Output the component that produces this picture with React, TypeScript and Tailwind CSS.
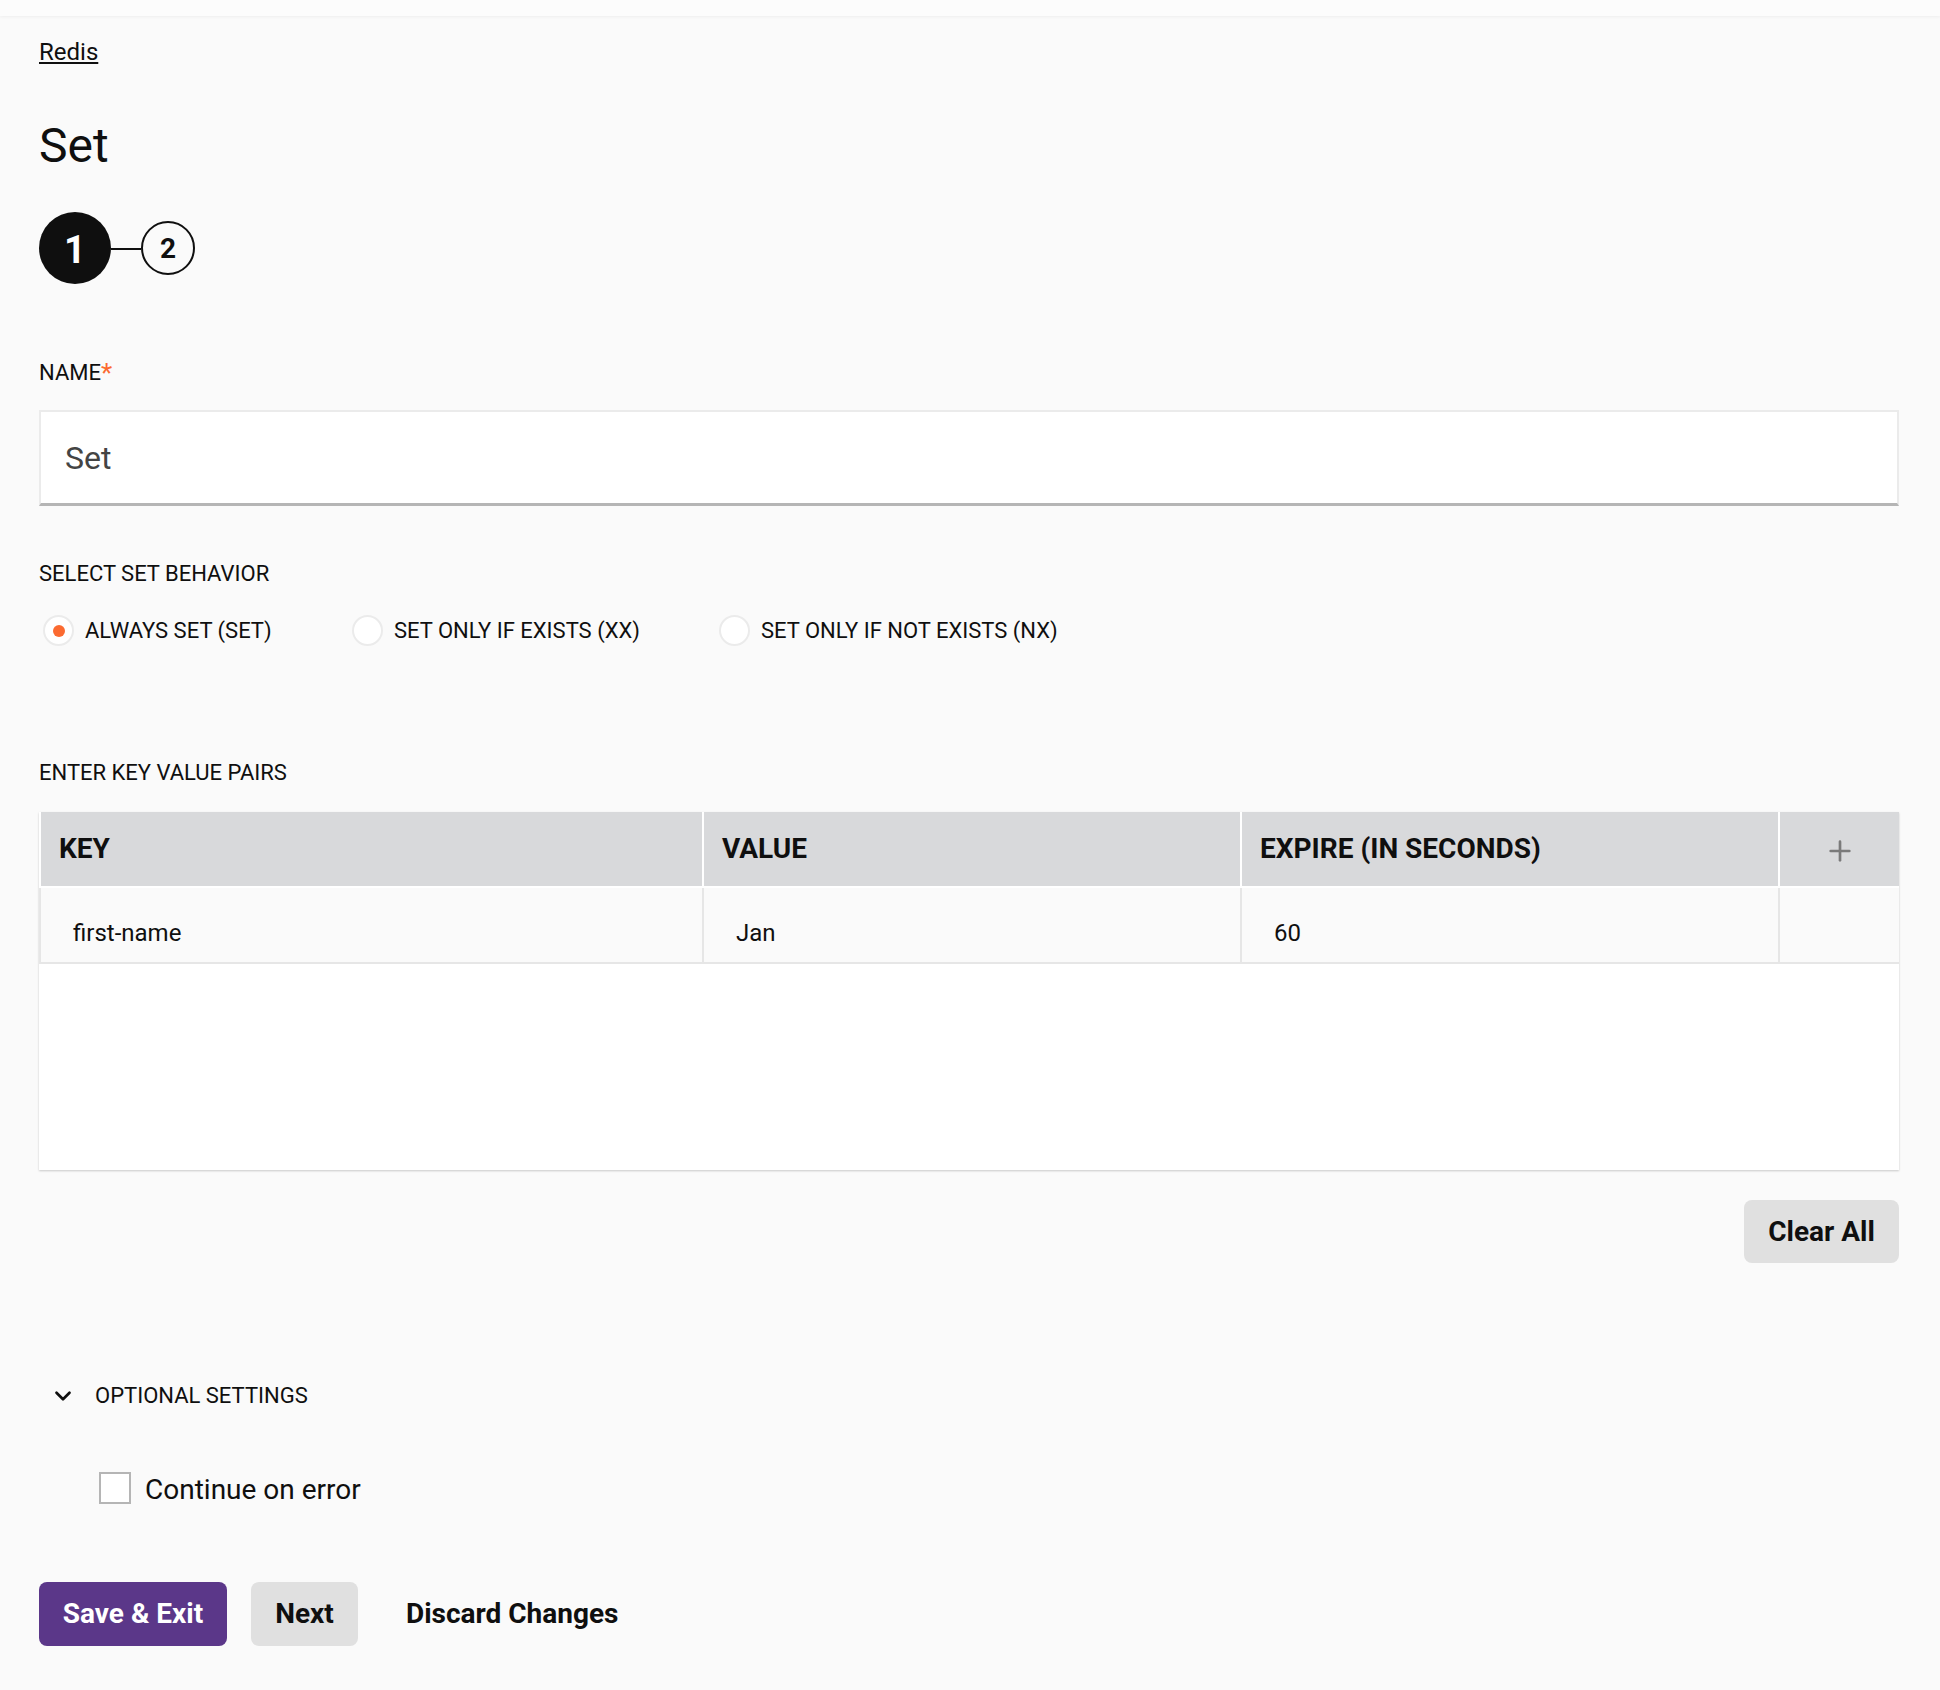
import { Plus, ChevronDown } from "lucide-react";

const font = { fontFamily: '"Roboto", "Liberation Sans", sans-serif' };

const radios = [
  { label: "ALWAYS SET (SET)", checked: true, width: "w-[309px]" },
  { label: "SET ONLY IF EXISTS (XX)", checked: false, width: "w-[367px]" },
  { label: "SET ONLY IF NOT EXISTS (NX)", checked: false, width: "w-auto" },
];

function Radio({ label, checked, width }: { label: string; checked: boolean; width: string }) {
  return (
    <div className={`flex items-center gap-[11px] ${width}`}>
      <span className="flex h-[31px] w-[31px] items-center justify-center rounded-full border-2 border-[#ebebeb] bg-white">
        {checked && <span className="h-[12px] w-[12px] rounded-full bg-[#fb6a31]" />}
      </span>
      <span className="text-[22px] leading-[30px] text-[#0f0f0f]">{label}</span>
    </div>
  );
}

export default function App() {
  return (
    <div style={font} className="min-h-[1690px] w-[1940px] bg-[#fafafa] text-[#0f0f0f]">
      <div className="h-4 bg-[#fcfcfc] shadow-[0_1px_3px_rgba(0,0,0,0.05)]" />
      <div className="flex flex-col pl-[39px] pr-[41px]">
        {/* Breadcrumb and title */}
        <a className="mt-[21px] self-start text-[24px] leading-[30px] underline underline-offset-2">Redis</a>
        <h1 className="mt-[49px] text-[48px] font-normal leading-[60px]">Set</h1>

        {/* Steps */}
        <div className="mt-[36px] flex items-center">
          <span className="flex h-[72px] w-[72px] items-center justify-center rounded-full bg-[#0f0f0f] pt-[5px] text-[38px] font-bold text-white">1</span>
          <span className="mt-[1px] h-[2px] w-[30px] bg-[#0f0f0f]" />
          <span className="flex h-[54px] w-[54px] items-center justify-center rounded-full border-2 border-[#0f0f0f] pt-[2px] text-[28px] font-bold">2</span>
        </div>

        {/* Name */}
        <div className="mt-[74px] text-[22px] leading-[30px]">
          NAME<span className="align-[-2px] text-[26px] leading-none text-[#fb6a31]">*</span>
        </div>
        <div className="mt-[22px] flex h-[96px] items-center border-x-2 border-t-2 border-b-[3px] border-x-[#ebebeb] border-t-[#ebebeb] border-b-[#b5b5b5] bg-white pl-6 text-[32px] text-[#444]">
          Set
        </div>

        {/* Behavior */}
        <div className="mt-[53px] text-[22px] leading-[30px]">SELECT SET BEHAVIOR</div>
        <div className="mt-[26px] flex pl-1">
          {radios.map((r) => (
            <Radio key={r.label} {...r} />
          ))}
        </div>

        {/* Key value table */}
        <div className="mt-[112px] text-[22px] leading-[30px]">ENTER KEY VALUE PAIRS</div>
        <div className="mt-[24px] bg-white shadow-[0_1px_2px_rgba(0,0,0,0.2)]">
          <div className="grid h-[74px] grid-cols-[661px_536px_536px_1fr] gap-x-[2px] pl-[2px] text-[28px] font-bold">
            <div className="flex items-center bg-[#d8d9db] pl-[18px]">KEY</div>
            <div className="flex items-center bg-[#d8d9db] pl-[18px]">VALUE</div>
            <div className="flex items-center bg-[#d8d9db] pl-[18px]">EXPIRE (IN SECONDS)</div>
            <div className="flex items-center justify-center bg-[#d8d9db] pt-1">
              <Plus size={32} strokeWidth={2} className="text-[#7a7a7a]" />
            </div>
          </div>
          <div className="mt-[2px] grid h-[76px] grid-cols-[661px_536px_536px_1fr] gap-x-[2px] border-b-2 border-b-[#e6e6e6] bg-[#e6e6e6] pl-[2px] text-[24px]">
            <div className="flex items-center bg-[#fafafa] pl-[32px] pt-4">first-name</div>
            <div className="flex items-center bg-[#fafafa] pl-[32px] pt-4">Jan</div>
            <div className="flex items-center bg-[#fafafa] pl-[32px] pt-4">60</div>
            <div className="bg-[#fafafa]" />
          </div>
          <div className="h-[206px]" />
        </div>

        <button className="mt-[30px] h-[63px] w-[155px] self-end rounded-lg bg-[#e0e0e0] text-[28px] font-bold">Clear All</button>

        {/* Optional settings */}
        <div className="mt-[118px] flex items-center pl-[11px]">
          <ChevronDown size={26} strokeWidth={2.5} />
          <span className="ml-[19px] text-[22px] leading-[30px]">OPTIONAL SETTINGS</span>
        </div>
        <div className="mt-[61px] flex items-start pl-[60px]">
          <span className="h-[32px] w-[32px] border-2 border-[#b5b5b5] bg-white" />
          <span className="ml-[14px] mt-[1px] text-[28px] leading-[34px]">Continue on error</span>
        </div>

        {/* Actions */}
        <div className="mt-[75px] flex items-center text-[28px] font-bold">
          <button className="h-[64px] w-[188px] rounded-lg bg-[#5b3789] text-white">Save &amp; Exit</button>
          <button className="ml-6 h-[64px] w-[107px] rounded-lg bg-[#e0e0e0]">Next</button>
          <button className="ml-[48px]">Discard Changes</button>
        </div>
      </div>
    </div>
  );
}
